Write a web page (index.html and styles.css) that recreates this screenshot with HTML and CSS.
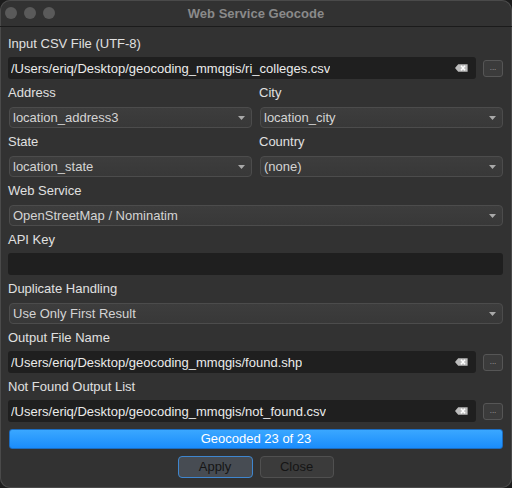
FILE: index.html
```html
<!DOCTYPE html>
<html>
<head>
<meta charset="utf-8">
<link rel="stylesheet" href="styles.css">
</head>
<body>
<div class="window">
  <div class="titlebar">
    <div class="lights"><span class="light"></span><span class="light"></span><span class="light"></span></div>
    <div class="title">Web Service Geocode</div>
    <div></div>
  </div>
  <div class="content">
    <div class="field">
      <div class="label">Input CSV File (UTF-8)</div>
      <div class="file-row">
        <div class="line-edit"><span class="value">/Users/eriq/Desktop/geocoding_mmqgis/ri_colleges.csv</span>
          <svg class="clear" width="13" height="8" viewBox="0 0 13 8"><path d="M0 4 L3.2 0.2 H12.6 V7.8 H3.2 Z" fill="#bdbdbd"/><path d="M6 1.8 L10 6.2 M10 1.8 L6 6.2" stroke="#ffffff" stroke-width="1.5"/></svg>
        </div>
        <div class="browse">...</div>
      </div>
    </div>
    <div class="pair">
      <div class="field">
        <div class="label">Address</div>
        <div class="combo"><span>location_address3</span><svg class="arrow" width="7" height="4" viewBox="0 0 7 4"><path d="M0 0 H7 L3.5 4 Z" fill="#a9a9a9"/></svg></div>
      </div>
      <div class="field">
        <div class="label">City</div>
        <div class="combo"><span>location_city</span><svg class="arrow" width="7" height="4" viewBox="0 0 7 4"><path d="M0 0 H7 L3.5 4 Z" fill="#a9a9a9"/></svg></div>
      </div>
    </div>
    <div class="pair">
      <div class="field">
        <div class="label">State</div>
        <div class="combo"><span>location_state</span><svg class="arrow" width="7" height="4" viewBox="0 0 7 4"><path d="M0 0 H7 L3.5 4 Z" fill="#a9a9a9"/></svg></div>
      </div>
      <div class="field">
        <div class="label">Country</div>
        <div class="combo"><span>(none)</span><svg class="arrow" width="7" height="4" viewBox="0 0 7 4"><path d="M0 0 H7 L3.5 4 Z" fill="#a9a9a9"/></svg></div>
      </div>
    </div>
    <div class="field">
      <div class="label">Web Service</div>
      <div class="combo"><span>OpenStreetMap / Nominatim</span><svg class="arrow" width="7" height="4" viewBox="0 0 7 4"><path d="M0 0 H7 L3.5 4 Z" fill="#a9a9a9"/></svg></div>
    </div>
    <div class="field">
      <div class="label">API Key</div>
      <div class="line-edit"></div>
    </div>
    <div class="field">
      <div class="label">Duplicate Handling</div>
      <div class="combo"><span>Use Only First Result</span><svg class="arrow" width="7" height="4" viewBox="0 0 7 4"><path d="M0 0 H7 L3.5 4 Z" fill="#a9a9a9"/></svg></div>
    </div>
    <div class="field">
      <div class="label">Output File Name</div>
      <div class="file-row">
        <div class="line-edit"><span class="value">/Users/eriq/Desktop/geocoding_mmqgis/found.shp</span>
          <svg class="clear" width="13" height="8" viewBox="0 0 13 8"><path d="M0 4 L3.2 0.2 H12.6 V7.8 H3.2 Z" fill="#bdbdbd"/><path d="M6 1.8 L10 6.2 M10 1.8 L6 6.2" stroke="#ffffff" stroke-width="1.5"/></svg>
        </div>
        <div class="browse">...</div>
      </div>
    </div>
    <div class="field">
      <div class="label">Not Found Output List</div>
      <div class="file-row">
        <div class="line-edit"><span class="value">/Users/eriq/Desktop/geocoding_mmqgis/not_found.csv</span>
          <svg class="clear" width="13" height="8" viewBox="0 0 13 8"><path d="M0 4 L3.2 0.2 H12.6 V7.8 H3.2 Z" fill="#bdbdbd"/><path d="M6 1.8 L10 6.2 M10 1.8 L6 6.2" stroke="#ffffff" stroke-width="1.5"/></svg>
        </div>
        <div class="browse">...</div>
      </div>
    </div>
    <div class="progress">Geocoded 23 of 23</div>
    <div class="buttons">
      <div class="button default">Apply</div>
      <div class="button">Close</div>
    </div>
  </div>
</div>
</body>
</html>
```
FILE: styles.css
```css
html, body {
  margin: 0;
  padding: 0;
  background: #1c1c1c;
}
body {
  font-family: "Liberation Sans", Arial, sans-serif;
  font-size: 13px;
}
.window {
  width: 512px;
  height: 488px;
  box-sizing: border-box;
  background: #323232;
  border-radius: 10px;
  box-shadow: inset 0 0 0 1px #4a4a4a;
  display: flex;
  flex-direction: column;
  overflow: hidden;
}
.titlebar {
  height: 26px;
  border-bottom: 1px solid #1b1b1b;
  display: grid;
  grid-template-columns: 1fr auto 1fr;
  align-items: center;
}
.lights {
  display: flex;
  gap: 7px;
  padding-left: 5px;
}
.light {
  width: 12px;
  height: 12px;
  border-radius: 50%;
  background: #5a5a5a;
}
.title {
  font-weight: bold;
  color: #8a8a8a;
}
.content {
  padding: 9px 9px 0 8px;
  display: flex;
  flex-direction: column;
  gap: 6px;
}
.field {
  display: flex;
  flex-direction: column;
  min-width: 0;
}
.label {
  height: 16px;
  line-height: 16px;
  color: #e0e0e0;
  margin-bottom: 4px;
  white-space: nowrap;
}
.pair {
  display: grid;
  grid-template-columns: 1fr 1fr;
  column-gap: 7px;
}
.file-row {
  display: flex;
  align-items: center;
  gap: 7px;
}
.line-edit {
  flex: none;
  height: 22px;
  margin-top: 1px;
  box-sizing: border-box;
  background: #1f1f1f;
  border-radius: 3px;
  display: flex;
  align-items: center;
  justify-content: space-between;
  padding: 0 8px 0 3px;
  color: #ebebeb;
  white-space: nowrap;
}
.file-row .line-edit {
  flex: 1 1 auto;
  min-width: 0;
}
.value {
  overflow: hidden;
}
.clear {
  flex: none;
}
.browse {
  width: 20px;
  height: 17px;
  margin-top: 1px;
  box-sizing: border-box;
  border: 1px solid #565656;
  background: #3b3b3b;
  border-radius: 3px;
  color: #a8a8a8;
  font-size: 8px;
  line-height: 14px;
  text-align: center;
  flex: none;
}
.combo {
  height: 21px;
  margin-top: 2px;
  margin-left: 1px;
  box-sizing: border-box;
  border: 1px solid #4c4c4c;
  border-radius: 4px;
  background: linear-gradient(#3d3d3d, #383838);
  display: flex;
  align-items: center;
  justify-content: space-between;
  padding: 0 6px 0 3px;
  color: #d4d4d4;
  white-space: nowrap;
}
.arrow {
  flex: none;
}
.progress {
  height: 20px;
  margin-top: 1px;
  margin-left: 1px;
  box-sizing: border-box;
  border: 1px solid #1c6cc0;
  border-radius: 3px;
  background: linear-gradient(#3aa7ff, #1a8cfc);
  color: #ffffff;
  text-align: center;
  line-height: 18px;
}
.buttons {
  margin-top: 1px;
  display: flex;
  justify-content: center;
  gap: 7px;
}
.button {
  width: 74px;
  height: 22px;
  box-sizing: border-box;
  border: 1px solid #505050;
  border-radius: 4px;
  background: #3b3b3b;
  color: #151515;
  text-align: center;
  line-height: 20px;
}
.button.default {
  width: 75px;
  border-color: #3f86cf;
  background: #474c53;
}
```
